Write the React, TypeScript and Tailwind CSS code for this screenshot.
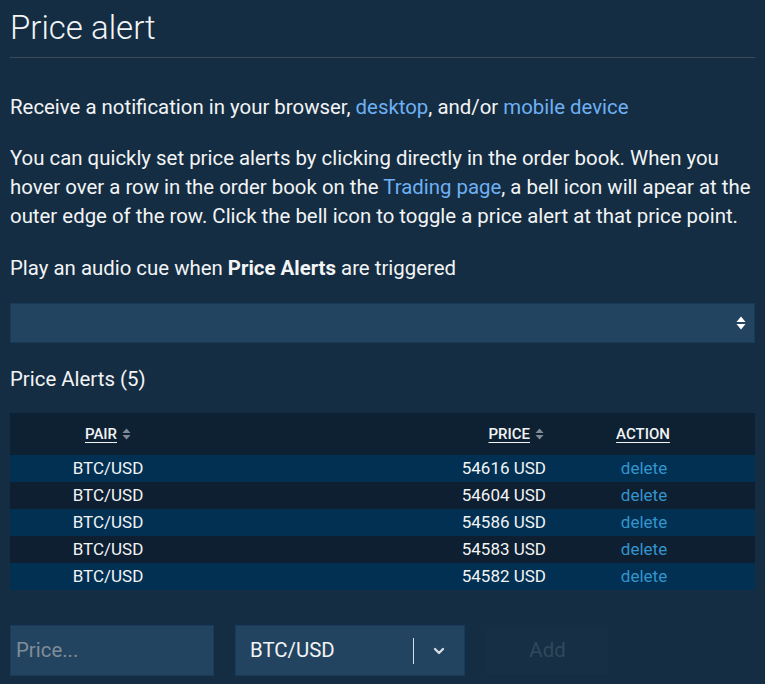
import { ChevronDown } from "lucide-react";

const alerts = [
  { pair: "BTC/USD", price: "54616 USD" },
  { pair: "BTC/USD", price: "54604 USD" },
  { pair: "BTC/USD", price: "54586 USD" },
  { pair: "BTC/USD", price: "54583 USD" },
  { pair: "BTC/USD", price: "54582 USD" },
];

function SortIcon() {
  return (
    <svg width="9" height="12" viewBox="0 0 9 12" className="ml-[5px] inline-block">
      <path d="M4.5 0.5L8.5 5H0.5z" fill="#7f8b96" />
      <path d="M4.5 11.5L8.5 7H0.5z" fill="#7f8b96" />
    </svg>
  );
}

export default function App() {
  return (
    <div
      className="min-h-[684px] w-full bg-[#152d42] px-[10px] text-[#f2f4f6]"
      style={{ fontFamily: "Roboto, 'Liberation Sans', sans-serif" }}
    >
      <h1 className="border-b border-[#3a4b5a] pt-2 pb-[9px] text-[33px] font-light leading-[40px]">
        Price alert
      </h1>

      <p className="mt-[35px] text-[20.4px] leading-[29px]">
        Receive a notification in your browser,{" "}
        <a className="text-[#6eb0f3]">desktop</a>, and/or{" "}
        <a className="text-[#6eb0f3]">mobile device</a>
      </p>

      <p className="mt-[22px] text-[20.4px] leading-[29px]">
        You can quickly set price alerts by clicking directly in the order book. When you hover over a
        row in the order book on the <a className="text-[#6eb0f3]">Trading page</a>, a bell icon will
        apear at the outer edge of the row. Click the bell icon to toggle a price alert at that price
        point.
      </p>

      <p className="mt-[23px] text-[20.4px] leading-[29px]">
        Play an audio cue when <b className="font-bold">Price Alerts</b> are triggered
      </p>

      <div className="mt-[20px] flex h-[40px] items-center justify-end border border-[#173a5a] bg-[#234460] pr-[8px]">
        <svg width="10" height="14" viewBox="0 0 10 14">
          <path d="M5 0.5L9.5 6H0.5z" fill="#ffffff" />
          <path d="M5 13.5L9.5 8H0.5z" fill="#ffffff" />
        </svg>
      </div>

      <h2 className="mt-[22px] text-[20.4px] font-normal leading-[29px]">Price Alerts (5)</h2>

      <div className="mt-[19px] text-[17px] font-normal">
        <div className="grid h-[42px] grid-cols-[196px_340px_194px_1fr] items-center bg-[#0d2132] text-[15px] font-medium">
          <div className="flex items-center justify-center">
            <span className="underline underline-offset-[3px]">PAIR</span>
            <SortIcon />
          </div>
          <div className="flex items-center justify-end pr-[2px]">
            <span className="underline underline-offset-[3px]">PRICE</span>
            <SortIcon />
          </div>
          <div className="text-center">
            <span className="underline underline-offset-[3px]">ACTION</span>
          </div>
          <div />
        </div>
        {alerts.map((a, i) => (
          <div
            key={i}
            className={`grid h-[27px] grid-cols-[196px_340px_194px_1fr] items-center ${
              i % 2 === 0 ? "bg-[#013052]" : "bg-[#0d1f30]"
            }`}
          >
            <div className="text-center">{a.pair}</div>
            <div className="text-right">{a.price}</div>
            <div className="pl-[2px] text-center text-[#3494cd]">delete</div>
            <div />
          </div>
        ))}
      </div>

      <div className="mt-[35px] flex items-center pb-[8px]">
        <div className="flex h-[51px] w-[204px] items-center border border-[#163b5c] bg-[#234460] px-[5px] text-[20.4px] text-[#7f8d98]">
          Price...
        </div>
        <div className="ml-[21px] flex h-[51px] w-[230px] items-center border border-[#163b5c] bg-[#234460] pl-[14px] text-[20.4px]">
          <span className="flex-1">BTC/USD</span>
          <span className="h-[26px] w-px bg-[#d7dde2]" />
          <ChevronDown className="mx-[17px] h-[16px] w-[16px] text-[#d7dde2]" strokeWidth={3.5} />
        </div>
        <button className="ml-[22px] h-[47px] w-[121px] bg-[#172f45] text-[20.4px] text-[#30485b]">
          Add
        </button>
      </div>
    </div>
  );
}
